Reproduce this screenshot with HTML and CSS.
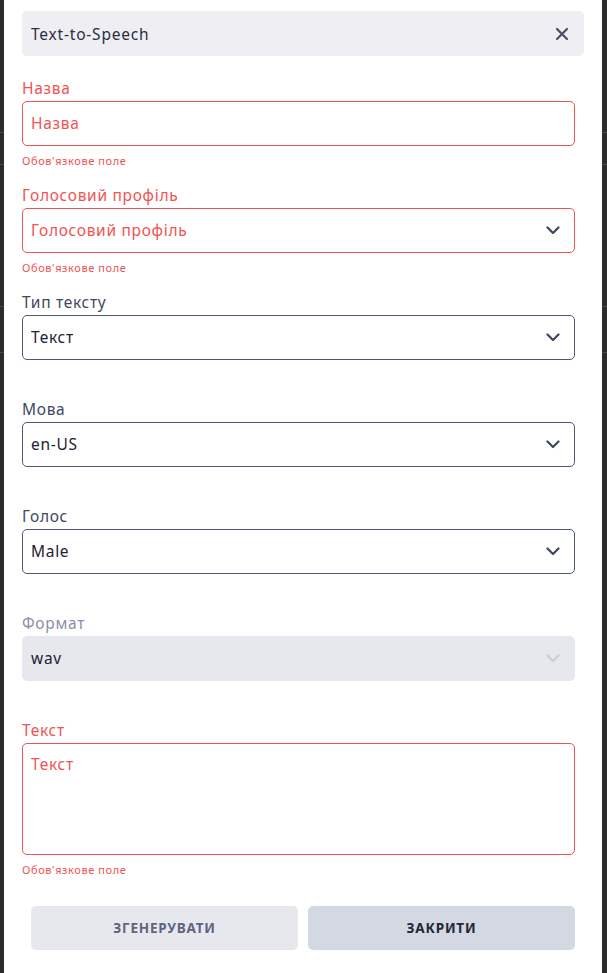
FILE: index.html
```html
<!DOCTYPE html>
<html lang="uk">
<head>
<meta charset="utf-8">
<title>Text-to-Speech</title>
<link rel="stylesheet" href="styles.css">
</head>
<body>
<div class="backdrop">
  <div class="modal">
    <div class="modal-header">
      <span class="modal-title">Text-to-Speech</span>
      <button class="close-btn" type="button" aria-label="Close">
        <svg width="14" height="14" viewBox="0 0 14 14"><path d="M2 2L12 12M12 2L2 12" stroke="currentColor" stroke-width="2.2" stroke-linecap="round"/></svg>
      </button>
    </div>

    <form class="form">
      <div class="field invalid">
        <label class="field-label">Назва</label>
        <div class="control"><span class="placeholder">Назва</span></div>
        <div class="helper">Обов'язкове поле</div>
      </div>

      <div class="field invalid">
        <label class="field-label">Голосовий профіль</label>
        <div class="control select"><span class="placeholder">Голосовий профіль</span>
          <svg class="chevron" width="14" height="9" viewBox="0 0 14 9"><path d="M1.5 1.5L7 7L12.5 1.5" fill="none" stroke="currentColor" stroke-width="2.2" stroke-linecap="round" stroke-linejoin="round"/></svg>
        </div>
        <div class="helper">Обов'язкове поле</div>
      </div>

      <div class="field">
        <label class="field-label">Тип тексту</label>
        <div class="control select"><span class="value">Текст</span>
          <svg class="chevron" width="14" height="9" viewBox="0 0 14 9"><path d="M1.5 1.5L7 7L12.5 1.5" fill="none" stroke="currentColor" stroke-width="2.2" stroke-linecap="round" stroke-linejoin="round"/></svg>
        </div>
        <div class="helper"></div>
      </div>

      <div class="field">
        <label class="field-label">Мова</label>
        <div class="control select"><span class="value">en-US</span>
          <svg class="chevron" width="14" height="9" viewBox="0 0 14 9"><path d="M1.5 1.5L7 7L12.5 1.5" fill="none" stroke="currentColor" stroke-width="2.2" stroke-linecap="round" stroke-linejoin="round"/></svg>
        </div>
        <div class="helper"></div>
      </div>

      <div class="field">
        <label class="field-label">Голос</label>
        <div class="control select"><span class="value">Male</span>
          <svg class="chevron" width="14" height="9" viewBox="0 0 14 9"><path d="M1.5 1.5L7 7L12.5 1.5" fill="none" stroke="currentColor" stroke-width="2.2" stroke-linecap="round" stroke-linejoin="round"/></svg>
        </div>
        <div class="helper"></div>
      </div>

      <div class="field disabled">
        <label class="field-label">Формат</label>
        <div class="control select"><span class="value">wav</span>
          <svg class="chevron" width="14" height="9" viewBox="0 0 14 9"><path d="M1.5 1.5L7 7L12.5 1.5" fill="none" stroke="currentColor" stroke-width="2.2" stroke-linecap="round" stroke-linejoin="round"/></svg>
        </div>
        <div class="helper"></div>
      </div>

      <div class="field invalid">
        <label class="field-label">Текст</label>
        <div class="control textarea"><span class="placeholder">Текст</span></div>
        <div class="helper">Обов'язкове поле</div>
      </div>

      <div class="actions">
        <button class="btn btn-generate" type="button">ЗГЕНЕРУВАТИ</button>
        <button class="btn btn-close" type="button">ЗАКРИТИ</button>
      </div>
    </form>
  </div>
</div>
</body>
</html>
```
FILE: styles.css
```css
* { box-sizing: border-box; }

html, body {
  margin: 0;
  height: 100%;
}

body {
  background-color: #2c2c2c;
  /* faint table rules of the page behind the overlay */
  background-image:
    linear-gradient(#474747, #474747),
    linear-gradient(#474747, #474747),
    linear-gradient(#474747, #474747),
    linear-gradient(#474747, #474747);
  background-size: 100% 1px;
  background-repeat: no-repeat;
  background-position: 0 132px, 0 164px, 0 306px, 0 352px;
  font-family: "Noto Sans", "Open Sans", sans-serif;
  overflow: hidden;
}

.backdrop {
  padding-left: 4px;
}

.modal {
  width: 598px;
  min-height: 973px;
  background: #ffffff;
  padding: 11px 18px 0 18px;
}

.modal-header {
  height: 45px;
  background: #eeeef3;
  border-radius: 5px;
  display: flex;
  align-items: center;
  justify-content: space-between;
  padding: 0 15px 0 9px;
}

.modal-title {
  font-size: 15.5px;
  letter-spacing: 0.8px;
  color: #2b2f40;
}

.close-btn {
  border: 0;
  background: none;
  padding: 0;
  color: #474f69;
  display: flex;
}

.form {
  width: 553px;
  padding-top: 24px;
}

.field {
  display: flex;
  flex-direction: column;
}

.field-label {
  height: 21px;
  line-height: 16px;
  font-size: 15.5px;
  letter-spacing: 0.7px;
  color: #404861;
}

.control {
  height: 45px;
  border: 1px solid #4e5877;
  border-radius: 5px;
  display: flex;
  align-items: center;
  justify-content: space-between;
  padding: 0 14px 0 8px;
  font-size: 15.5px;
  letter-spacing: 0.7px;
  color: #1e2130;
}

.control span {
  position: relative;
  top: -1px;
}

.chevron {
  color: #3e465f;
}

.helper {
  height: 41px;
  font-size: 11px;
  letter-spacing: 0.6px;
  line-height: 15px;
  padding-top: 7px;
  color: #f05454;
}

.invalid .field-label,
.invalid .placeholder {
  color: #f05454;
}

.invalid .control {
  border-color: #f05454;
}

.disabled .field-label {
  color: #8a90a6;
}

.disabled .control {
  background: #e7e8ee;
  border-color: #e7e8ee;
}

.disabled .chevron {
  color: #c9ccd7;
}

.textarea {
  height: 112px;
  align-items: flex-start;
  padding-top: 10px;
}

.actions {
  display: flex;
  gap: 10px;
  padding: 10px 0 0 9px;
}

.btn {
  flex: 1;
  height: 44px;
  border: 0;
  border-radius: 5px;
  font-family: inherit;
  font-size: 13.5px;
  font-weight: 700;
  letter-spacing: 0.8px;
}

.btn-generate {
  background: #e7e8ee;
  color: #5d6582;
}

.btn-close {
  background: #d4d8e2;
  color: #23263a;
}
```
